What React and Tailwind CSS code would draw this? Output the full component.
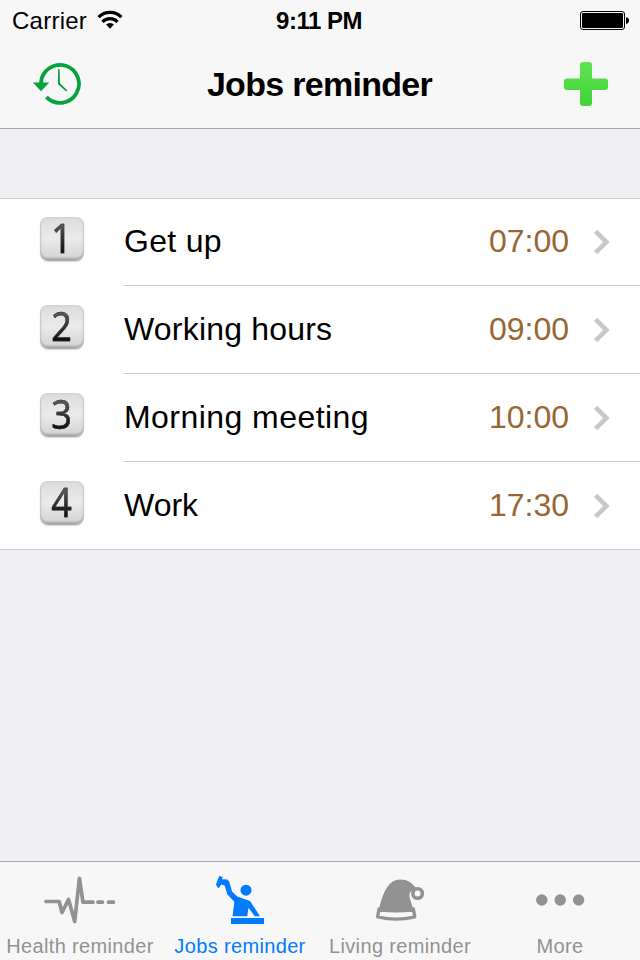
import clsx from 'clsx';

const jobs = [
  { id: 1, title: 'Get up', time: '07:00', spacing: 'tracking-[0.3px]' },
  { id: 2, title: 'Working hours', time: '09:00', spacing: 'tracking-[0.2px]' },
  { id: 3, title: 'Morning meeting', time: '10:00', spacing: 'tracking-[0.45px]' },
  { id: 4, title: 'Work', time: '17:30', spacing: 'tracking-normal' },
];

function WifiIcon() {
  return (
    <svg width="26" height="20" viewBox="0 0 26 20" fill="none" stroke="#000" strokeWidth="3.2">
      <path d="M1.6 7.2A16 16 0 0 1 24.4 7.2" />
      <path d="M5.4 11.9A10.6 10.6 0 0 1 20.6 11.9" />
      <path d="M9 14.6A5.8 5.8 0 0 1 17 14.6L13 18.8Z" fill="#000" stroke="none" />
    </svg>
  );
}

function BatteryIcon() {
  return (
    <svg width="50" height="20" viewBox="0 0 50 20">
      <rect x="0.5" y="0.5" width="44" height="18" rx="2.5" fill="none" stroke="#000" />
      <rect x="2" y="2" width="41" height="15" rx="1.2" fill="#000" />
      <path d="M46 6.2Q49 6.6 49 9.6T46 13Z" fill="#000" />
    </svg>
  );
}

function HistoryIcon() {
  return (
    <svg width="48" height="44" viewBox="0 0 48 44" fill="none" stroke="#06a23c">
      <path d="M8 22V20.8A19 19 0 1 1 13.4 35.2" strokeWidth="3.8" />
      <path d="M0 20.6H16.2L8 29.2Z" fill="#06a23c" stroke="none" />
      <path d="M25 7.2H26.6L27 21.2L34.4 28.4L33.2 29.4L25 22.2Z" fill="#06a23c" stroke="none" />
    </svg>
  );
}

function PlusIcon() {
  return (
    <svg width="44" height="44" viewBox="0 0 44 44">
      <defs>
        <linearGradient id="plus" x1="0" y1="0" x2="0" y2="1">
          <stop offset="0" stopColor="#5fe352" />
          <stop offset="1" stopColor="#41d437" />
        </linearGradient>
      </defs>
      <path
        d="M19 0H25Q28 0 28 3V16.5H41Q44 16.5 44 19.5V25Q44 28 41 28H28V41Q28 44 25 44H19Q16 44 16 41V28H3Q0 28 0 25V19.5Q0 16.5 3 16.5H16V3Q16 0 19 0Z"
        fill="url(#plus)"
      />
    </svg>
  );
}

function PulseIcon() {
  return (
    <svg width="72" height="48" viewBox="0 0 72 48" fill="none" stroke="currentColor" strokeWidth="3.7" strokeLinecap="round" strokeLinejoin="round">
      <path d="M2 25.5H15.2L18 36.5L24.6 23.4L30.7 45.5L35.4 2.3L39 26.2H49" />
      <path d="M54 26.2H58.5M64.5 26.2H69.5" />
    </svg>
  );
}

function WorkerIcon() {
  return (
    <svg width="50" height="50" viewBox="0 0 50 50" fill="currentColor">
      <path d="M4.3 1L7.7 2L7 4.3L12.3 4.5L14.3 6.7L17 16.5L22.3 21.5L35 26L45 41.2H39.8L33.4 32.7L32.3 41.2H17.6L19.3 26.7L12.3 19.3L9.6 10.4L6.4 9.4L3.4 13.4L1 9.8L2.4 5.4Z" />
      <circle cx="31" cy="15.2" r="5.5" />
      <path d="M16 43H49V49H16Z" />
    </svg>
  );
}

function HatIcon() {
  return (
    <svg width="50" height="44" viewBox="0 0 50 44" fill="currentColor">
      <path d="M4 31C8 13 14.5 1.4 25 1.4C32.5 1.4 37 4.6 41 10L37.4 12.5C34.2 13.4 34.2 17 34.9 20.5L38.2 31Q21 35 4 31Z" />
      <path d="M4 31Q21.5 34.8 38.4 31L39.7 38.8Q21.5 43.4 2.7 38.8Z" fill="#f7f7f7" stroke="currentColor" strokeWidth="3.4" strokeLinejoin="round" />
      <circle cx="42.6" cy="15.5" r="4.8" fill="#f7f7f7" stroke="currentColor" strokeWidth="3.6" />
    </svg>
  );
}

function MoreIcon() {
  return (
    <svg width="50" height="12" viewBox="0 0 50 12" fill="currentColor">
      <circle cx="6.8" cy="6" r="5.7" />
      <circle cx="25.2" cy="6" r="5.7" />
      <circle cx="43.6" cy="6" r="5.7" />
    </svg>
  );
}

const tabs = [
  { label: 'Health reminder', icon: <PulseIcon /> },
  { label: 'Jobs reminder', icon: <WorkerIcon />, active: true },
  { label: 'Living reminder', icon: <HatIcon /> },
  { label: 'More', icon: <MoreIcon /> },
];

function NumberKey({ value }) {
  return (
    <div className="flex h-[43px] w-[44px] justify-center rounded-[8px] bg-linear-to-b from-[#dcdcdc] via-[#ebebeb] to-[#d2d2d2] shadow-[0_2px_2px_-1px_#888,inset_0_-2px_2px_#a8a8a8,inset_0_0_3px_#c4c4c4]">
      <span className="-mt-px mr-px h-[44px] scale-x-90 bg-linear-to-b from-[#555] from-25% to-[#111] to-80% bg-clip-text font-['Noto_Sans',sans-serif] text-[40px] leading-[44px] text-transparent [-webkit-text-stroke:0.4px_#333]">
        {value}
      </span>
    </div>
  );
}

function JobRow({ job, first, last }) {
  return (
    <li className="flex h-[88px] pl-[40px] first:h-[87px] last:h-[87px]">
      <div className={clsx('flex w-[84px] shrink-0 items-center', first ? 'pb-[8px]' : 'pb-[7px]')}>
        <NumberKey value={job.id} />
      </div>
      <div className={clsx('flex flex-1 items-center pr-[29px]', first ? 'pb-[2px]' : 'pb-px', !last && 'border-b border-[#c8c7cc]')}>
        <span className={clsx('flex-1 text-[32px] leading-[38px]', job.spacing)}>{job.title}</span>
        <span className="text-[32px] leading-[38px] text-[#996633]">{job.time}</span>
        <svg className="mt-[2px] ml-[24px]" width="18" height="26" viewBox="0 0 18 26" fill="none" stroke="#c7c7cc" strokeWidth="4.6">
          <path d="M2.6 2.4L13.4 13L2.6 23.6" />
        </svg>
      </div>
    </li>
  );
}

export default function App() {
  return (
    <div className="flex h-[960px] w-[640px] flex-col overflow-hidden bg-[#efeff4] font-['Liberation_Sans',Arial,sans-serif] text-black">
      <header className="h-[129px] border-b border-[#a7a7aa] bg-[#f7f7f7]">
        <div className="grid h-[40px] grid-cols-3 items-center pr-[10px] pl-[12px] text-[24px]">
          <div className="flex items-center gap-[10px]">
            <span className="pt-[2px] leading-[38px] tracking-[0.25px]">Carrier</span>
            <WifiIcon />
          </div>
          <span className="pt-[2px] pr-[4px] text-center leading-[38px] font-bold tracking-[-0.5px]">9:11 PM</span>
          <div className="flex justify-end pt-px">
            <BatteryIcon />
          </div>
        </div>
        <div className="flex h-[88px] items-center justify-between pr-[32px] pl-[33px]">
          <HistoryIcon />
          <h1 className="pr-[6px] text-[34px] font-bold tracking-[-0.7px]">Jobs reminder</h1>
          <PlusIcon />
        </div>
      </header>

      <main className="flex-1 pt-[69px]">
        <ul className="border-y border-[#c8c7cc] bg-white">
          {jobs.map((job, i) => (
            <JobRow key={job.id} job={job} first={i === 0} last={i === jobs.length - 1} />
          ))}
        </ul>
      </main>

      <nav className="grid h-[99px] grid-cols-4 border-t border-[#a7a7aa] bg-[#f7f7f7]">
        {tabs.map((tab) => (
          <div key={tab.label} className={clsx('flex flex-col items-center', tab.active ? 'text-[#007aff]' : 'text-[#929292]')}>
            <div className="flex h-[76px] items-center">{tab.icon}</div>
            <span className="-mt-[2px] text-[20px] leading-[20px] tracking-[0.35px] whitespace-nowrap">{tab.label}</span>
          </div>
        ))}
      </nav>
    </div>
  );
}
